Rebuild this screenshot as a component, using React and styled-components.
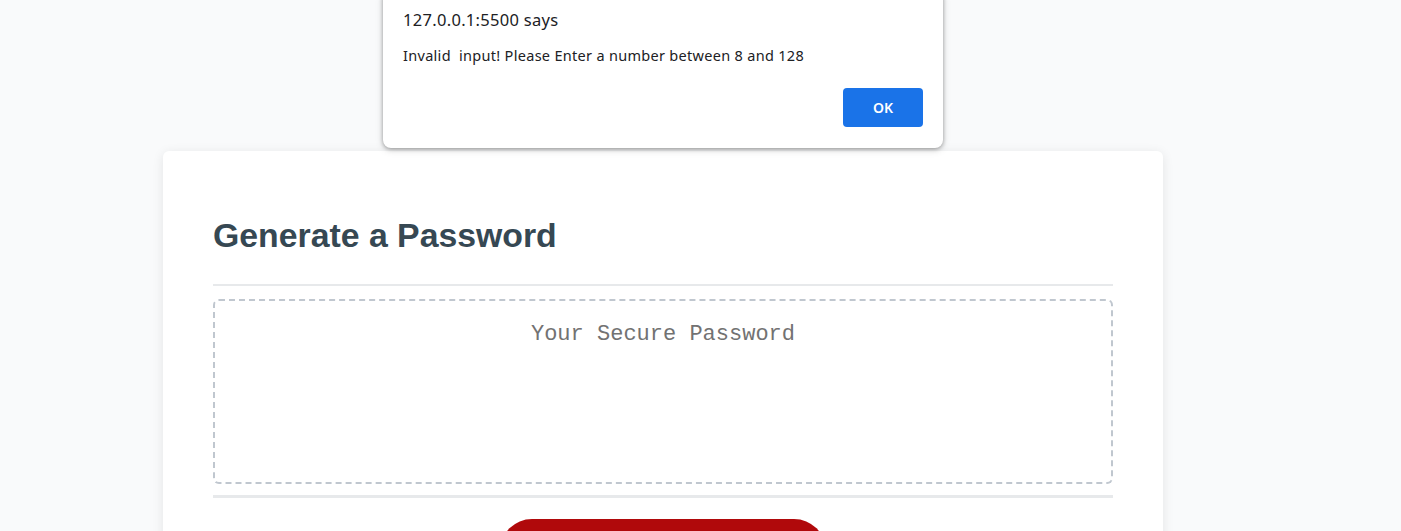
import React from "react";
import styled, { createGlobalStyle } from "styled-components";

const GlobalStyle = createGlobalStyle`
  html, body {
    margin: 0;
    padding: 0;
    background: #f9fafb;
    font-family: "Liberation Sans", Arial, sans-serif;
    overflow: hidden;
  }
`;

const Page = styled.div`
  position: relative;
  min-height: 531px;
  width: 1326px;
  margin: 0 auto 0 0;
  padding-top: 151px;
`;

const Card = styled.div`
  width: 1000px;
  margin: 0 auto;
  box-sizing: border-box;
  padding: 64px 50px 40px;
  background: #ffffff;
  border-radius: 6px;
  box-shadow: 0 2px 12px rgba(0, 0, 0, 0.09);
`;

const Header = styled.div`
  padding-bottom: 28px;
  border-bottom: 2px solid #e7e9eb;
`;

const Title = styled.h2`
  margin: 0;
  font-size: 33.8px;
  line-height: 41px;
  font-weight: 700;
  color: #364853;
`;

const Body = styled.div`
  padding: 13px 0 11px;
  border-bottom: 3px solid #e7e9eb;
`;

const PasswordBox = styled.textarea`
  display: block;
  width: 100%;
  height: 185px;
  box-sizing: border-box;
  padding: 20px 16px 18px;
  border: 2px dashed #c0c7cf;
  border-radius: 6px;
  resize: none;
  overflow: hidden;
  outline: none;
  text-align: center;
  font-family: "Liberation Mono", "DejaVu Sans Mono", monospace;
  font-size: 22px;
  line-height: 28px;
  color: #333;

  &::placeholder {
    color: #727272;
  }
`;

const Footer = styled.div`
  display: flex;
  justify-content: center;
  padding-top: 21px;
`;

const GenerateButton = styled.button`
  width: 326px;
  border: none;
  border-radius: 32px;
  background: #b0090b;
  color: #fff;
  font-family: "Liberation Sans", Arial, sans-serif;
  font-size: 22px;
  line-height: 22px;
  padding: 26px 34px 18px;
  cursor: pointer;
`;

const Dialog = styled.div`
  position: absolute;
  top: -10px;
  left: 383px;
  width: 560px;
  box-sizing: border-box;
  padding: 20px 20px 21px;
  background: #fff;
  border-radius: 8px;
  box-shadow: 0 1px 4px rgba(0, 0, 0, 0.35), 0 2px 8px rgba(0, 0, 0, 0.12);
  font-family: "Noto Sans", "Open Sans", sans-serif;
  display: flex;
  flex-direction: column;
`;

const DialogTitle = styled.div`
  font-size: 16.5px;
  line-height: 20px;
  letter-spacing: 0.3px;
  color: #202124;
`;

const DialogMessage = styled.div`
  margin-top: 16px;
  font-size: 14.5px;
  line-height: 18px;
  letter-spacing: 0.3px;
  color: #202124;
  white-space: pre;
`;

const DialogActions = styled.div`
  display: flex;
  justify-content: flex-end;
  margin-top: 24px;
`;

const OkButton = styled.button`
  width: 80px;
  height: 39px;
  border: none;
  border-radius: 4px;
  background: #1a73e8;
  color: #fff;
  font-family: "Noto Sans", "Open Sans", sans-serif;
  font-weight: 600;
  font-size: 14px;
`;

export default function App() {
  return (
    <>
      <GlobalStyle />
      <Page>
        <Card>
          <Header>
            <Title>Generate a Password</Title>
          </Header>
          <Body>
            <PasswordBox
              readOnly
              placeholder="Your Secure Password"
              aria-label="Generated Password"
            />
          </Body>
          <Footer>
            <GenerateButton>Generate Password</GenerateButton>
          </Footer>
        </Card>

        <Dialog role="alertdialog">
          <DialogTitle>127.0.0.1:5500 says</DialogTitle>
          <DialogMessage>{"Invalid  input! Please Enter a number between 8 and 128"}</DialogMessage>
          <DialogActions>
            <OkButton>OK</OkButton>
          </DialogActions>
        </Dialog>
      </Page>
    </>
  );
}
